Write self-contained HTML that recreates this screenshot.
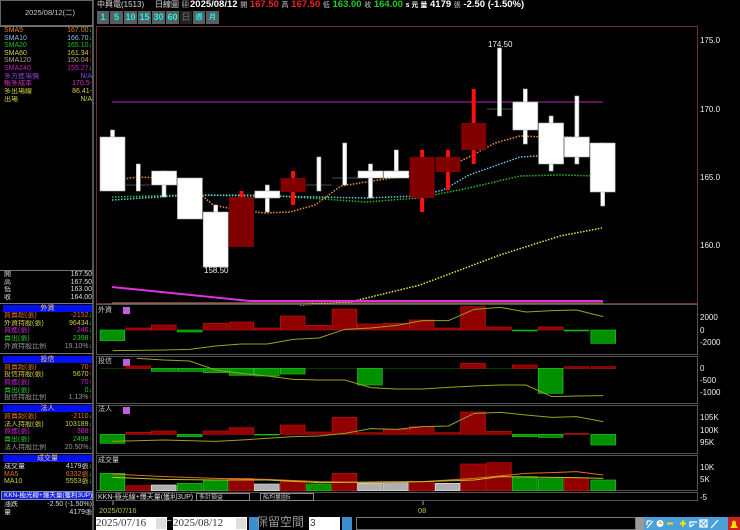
<!DOCTYPE html>
<html><head><meta charset="utf-8"><style>
*{margin:0;padding:0;box-sizing:border-box}
body{width:740px;height:530px;background:#000;overflow:hidden;position:relative;font-family:"Liberation Sans","Noto Sans CJK TC",sans-serif;color:#fff}
.a{position:absolute;white-space:nowrap;line-height:1}
.s{font-size:8px}
.hd{position:absolute;left:3px;width:89px;height:7px;background:#0010f0;color:#fc6;font-size:7px;line-height:7px;text-align:center}
.row{position:absolute;left:4px;width:88px;font-size:7px;line-height:8px;height:8px;display:flex;justify-content:space-between;white-space:nowrap;overflow:hidden}
.row b{font-weight:normal}
.up{color:#f22}.dn{color:#2d2}
.btn{position:absolute;top:11px;height:13px;background:#566060;color:#2ee;font-size:9px;line-height:13px;text-align:center;font-weight:bold}
</style></head><body>
<div class="a" style="left:0;top:0;width:94px;height:530px;border-right:2px solid #555"></div>
<div class="a" style="left:0;top:0;width:93px;height:26px;border:1px solid #666"></div>
<div class="a s" style="left:25px;top:9px;color:#ccc;font-size:7.5px">2025/08/12(二)</div>
<div class="a" style="left:0;top:26px;width:93px;height:1px;background:#777"></div>
<div class="row" style="top:27px;color:#e08020"><span>SMA5</span><b>167.00<span class="dn">↓</span></b></div>
<div class="row" style="top:35px;color:#80c0e0"><span>SMA10</span><b>166.70<span class="dn">↓</span></b></div>
<div class="row" style="top:42px;color:#20c020"><span>SMA20</span><b>165.10<span class="dn">↓</span></b></div>
<div class="row" style="top:50px;color:#d0d040"><span>SMA60</span><b>161.34<span class="up">↑</span></b></div>
<div class="row" style="top:57px;color:#c0a080"><span>SMA120</span><b>150.04<span class="up">↑</span></b></div>
<div class="row" style="top:65px;color:#c020c0"><span>SMA240</span><b>155.27<span class="dn">↓</span></b></div>
<div class="row" style="top:73px;color:#9040e0"><span>多方進場價</span><b>N/A</b></div>
<div class="row" style="top:80px;color:#e030c0"><span>帳多成本</span><b>170.5-</b></div>
<div class="row" style="top:88px;color:#d0d040"><span>多出場線</span><b>86.41-</b></div>
<div class="row" style="top:96px;color:#d0d040"><span>出場</span><b>N/A</b></div>
<div class="a" style="left:0;top:270px;width:93px;height:1px;background:#777"></div>
<div class="row" style="top:271px;color:#ddd"><span>開</span><b>167.50</b></div>
<div class="row" style="top:279px;color:#ddd"><span>高</span><b>167.50</b></div>
<div class="row" style="top:286px;color:#ddd"><span>低</span><b>163.00</b></div>
<div class="row" style="top:294px;color:#ddd"><span>收</span><b>164.00</b></div>
<div class="a" style="left:0;top:303px;width:93px;height:1px;background:#777"></div>
<div class="hd" style="top:305px">外資</div>
<div class="row" style="top:312px;color:#e07020"><span>買賣超(張)</span><b>-2152<span class="dn">↓</span></b></div>
<div class="row" style="top:320px;color:#d0d040"><span>外資持股(張)</span><b>96434<span class="dn">↓</span></b></div>
<div class="row" style="top:327px;color:#d020d0"><span>買進(張)</span><b>246<span class="dn">↓</span></b></div>
<div class="row" style="top:335px;color:#20d020"><span>賣出(張)</span><b>2398<span class="up">↑</span></b></div>
<div class="row" style="top:343px;color:#999"><span>外資持股比例</span><b>19.10%<span class="dn">↓</span></b></div>
<div class="a" style="left:0;top:353px;width:93px;height:1px;background:#777"></div>
<div class="hd" style="top:356px">投信</div>
<div class="row" style="top:364px;color:#e07020"><span>買賣超(張)</span><b>70<span class="up">↑</span></b></div>
<div class="row" style="top:371px;color:#d0d040"><span>投信持股(張)</span><b>5670<span class="up">↑</span></b></div>
<div class="row" style="top:379px;color:#d020d0"><span>買進(張)</span><b>70<span class="up">↑</span></b></div>
<div class="row" style="top:387px;color:#20d020"><span>賣出(張)</span><b>0<span class="dn">↓</span></b></div>
<div class="row" style="top:394px;color:#999"><span>投信持股比例</span><b>1.13%<span class="up">↑</span></b></div>
<div class="a" style="left:0;top:403px;width:93px;height:1px;background:#777"></div>
<div class="hd" style="top:405px">法人</div>
<div class="row" style="top:413px;color:#e07020"><span>買賣超(張)</span><b>-2110<span class="dn">↓</span></b></div>
<div class="row" style="top:421px;color:#d0d040"><span>法人持股(張)</span><b>103189<span class="dn">↓</span></b></div>
<div class="row" style="top:428px;color:#d020d0"><span>買進(張)</span><b>388<span class="up">↑</span></b></div>
<div class="row" style="top:436px;color:#20d020"><span>賣出(張)</span><b>2498<span class="up">↑</span></b></div>
<div class="row" style="top:444px;color:#999"><span>法人持股比例</span><b>20.50%<span class="dn">↓</span></b></div>
<div class="a" style="left:0;top:453px;width:93px;height:1px;background:#777"></div>
<div class="hd" style="top:455px">成交量</div>
<div class="row" style="top:463px;color:#ddd"><span>成交量</span><b>4179張<span class="dn">↓</span></b></div>
<div class="row" style="top:471px;color:#e07020"><span>MA5</span><b>6332張<span class="dn">↓</span></b></div>
<div class="row" style="top:478px;color:#d0d040"><span>MA10</span><b>5553張<span class="dn">↓</span></b></div>
<div class="a" style="left:1px;top:491px;width:92px;height:9px;background:#1020e0;border:1px solid #88a;color:#fff;font-size:6.5px;line-height:7px;padding-left:2px;overflow:hidden">KKN-極光線+爆天量(獲利3UP)</div>
<div class="row" style="top:501px;color:#ddd"><span>漲跌</span><b>-2.50 (-1.50%)</b></div>
<div class="row" style="top:509px;color:#ddd"><span>量</span><b>4179張</b></div>

<div class="a" style="left:97px;top:1px;font-size:8px;color:#ddd">中興電(1513)</div>
<div class="a" style="left:155px;top:1px;font-size:8px;color:#ddd">日線圖 ▦</div>
<div class="a" style="left:190px;top:0;font-size:9.5px;font-weight:bold;color:#fff">2025/08/12 <span style="font-size:7px;font-weight:normal;color:#ccc">開</span> <span style="color:#e22">167.50</span> <span style="font-size:7px;font-weight:normal;color:#ccc">高</span> <span style="color:#e22">167.50</span> <span style="font-size:7px;font-weight:normal;color:#ccc">低</span> <span style="color:#2c2">163.00</span> <span style="font-size:7px;font-weight:normal;color:#ccc">收</span> <span style="color:#2c2">164.00</span> <span style="font-size:7px">s 元 量</span> 4179 <span style="font-size:7px;font-weight:normal;color:#ccc">張</span> -2.50 (-1.50%)</div>
<div class="btn" style="left:97px;width:12px">1</div>
<div class="btn" style="left:110px;width:13px">5</div>
<div class="btn" style="left:124px;width:13px">10</div>
<div class="btn" style="left:138px;width:13px">15</div>
<div class="btn" style="left:152px;width:13px">30</div>
<div class="btn" style="left:166px;width:13px">60</div>
<div class="btn" style="left:180px;width:12px;background:#222;color:#555">日</div>
<div class="btn" style="left:193px;width:12px;font-size:7px">週</div>
<div class="btn" style="left:206px;width:13px;font-size:7px">月</div>

<svg class="a" style="left:0;top:0" width="740" height="530" viewBox="0 0 740 530">
<rect x="96.5" y="26.5" width="601" height="277" fill="none" stroke="#6a3040"/>
<line x1="112" y1="102" x2="603" y2="102" stroke="#902090" stroke-width="1.2"/>
<g fill="none" stroke-width="1.5" stroke-dasharray="1.5 1.5">
<polyline stroke="#e8e840" points="300,305 350,302 420,285 500,255 560,236 602,228"/>
<polyline stroke="#20c020" points="112,197 188,195 264,195 366,202 418,198 469,188 520,176 560,175 598,176"/>
<polyline stroke="#70c8e8" points="112,200 188,195 264,196 366,198 418,196 443,190 469,175 520,157 572,154 598,154"/>
<polyline stroke="#f09030" points="112,181 137,177 162,178 188,183 213,205 238,210 264,213 290,212 315,205 341,186 366,182 392,178 418,175 443,169 469,157 495,143 520,136 546,137 572,137 598,148"/>
</g>
<polyline fill="none" stroke="#e030e0" stroke-width="2" points="112,287 250,301 603,301"/>
<line x1="112" y1="303" x2="603" y2="303" stroke="#c09070" stroke-width="1"/>
<g stroke="#aaa" stroke-width="0.6">
<rect x="110.5" y="130" width="4" height="7" fill="#fff"/><rect x="100" y="137" width="25" height="54" fill="#fff"/>
<line x1="126" y1="185" x2="150" y2="185" stroke="#999"/><rect x="136.3" y="164" width="4" height="27" fill="#fff"/>
<rect x="162" y="171" width="4" height="26" fill="#fff"/><rect x="151.6" y="171" width="25" height="14" fill="#fff"/>
<rect x="177.4" y="178" width="25" height="41" fill="#fff"/>
<rect x="213.7" y="205" width="4" height="7" fill="#fff"/><rect x="203.2" y="212" width="25" height="55" fill="#fff"/>
<rect x="265.3" y="185" width="4" height="27" fill="#fff"/><rect x="254.8" y="191" width="25" height="7" fill="#fff"/>
<line x1="306" y1="185" x2="332" y2="185" stroke="#999"/><rect x="316.9" y="157" width="4" height="34" fill="#fff"/>
<line x1="332" y1="178" x2="358" y2="178" stroke="#999"/><rect x="342.7" y="143" width="4" height="42" fill="#fff"/>
<rect x="368.5" y="164" width="4" height="34" fill="#fff"/><rect x="358" y="171" width="25" height="7" fill="#fff"/>
<rect x="394.3" y="150" width="4" height="28" fill="#fff"/><rect x="383.8" y="171" width="25" height="7" fill="#fff"/>
<line x1="487" y1="109" x2="512" y2="109" stroke="#999"/><rect x="497.5" y="48" width="4" height="68" fill="#fff"/>
<rect x="523.3" y="89" width="4" height="55" fill="#fff"/><rect x="512.8" y="102" width="25" height="28" fill="#fff"/>
<rect x="549.1" y="116" width="4" height="55" fill="#fff"/><rect x="538.6" y="123" width="25" height="41" fill="#fff"/>
<rect x="574.9" y="96" width="4" height="68" fill="#fff"/><rect x="564.4" y="137" width="25" height="20" fill="#fff"/>
<rect x="600.7" y="143" width="4" height="63" fill="#fff"/><rect x="590.2" y="143" width="25" height="49" fill="#fff"/>
</g>
<g fill="#ff1010">
<rect x="239.5" y="191" width="4" height="8"/><rect x="291.1" y="171" width="4" height="34"/>
<rect x="420.1" y="150" width="4" height="62"/><rect x="445.9" y="150" width="4" height="40"/><rect x="471.7" y="89" width="4" height="75"/>
</g>
<g fill="#800000">
<rect x="229" y="197" width="25" height="50"/><rect x="280.6" y="178" width="25" height="14"/>
<rect x="409.6" y="157" width="25" height="41"/><rect x="435.4" y="157" width="25" height="15"/><rect x="461.2" y="123" width="25" height="27"/>
</g>
<g font-size="8" fill="#eee" font-family="Liberation Sans">
<text x="488" y="47">174.50</text><text x="204" y="273">158.50</text>
<text x="700" y="43">175.0</text><text x="700" y="112">170.0</text><text x="700" y="180">165.0</text><text x="700" y="248">160.0</text>
<text x="700" y="320">2000</text><text x="700" y="333">0</text><text x="700" y="345">-2000</text>
<text x="700" y="371">0</text><text x="700" y="383">-500</text><text x="700" y="395">-1000</text>
<text x="700" y="420">105K</text><text x="700" y="433">100K</text><text x="700" y="445">95K</text>
<text x="700" y="470">10K</text><text x="700" y="482">5K</text><text x="700" y="500">-5</text>
</g>
<g fill="none" stroke="#555">
<rect x="96.5" y="304.5" width="601" height="50"/>
<rect x="96.5" y="356.5" width="601" height="47"/>
<rect x="96.5" y="405.5" width="601" height="48"/>
<rect x="96.5" y="455.5" width="601" height="35"/>
<rect x="96.5" y="492.5" width="601" height="8"/>
</g>
<g font-size="7" fill="#ccc"><text x="98" y="312">外資</text><text x="98" y="363">投信</text><text x="98" y="411">法人</text><text x="98" y="462">成交量</text></g>
<g fill="#c060e0"><rect x="123" y="307" width="7" height="7"/><rect x="123" y="359" width="7" height="7"/><rect x="123" y="407" width="7" height="7"/></g>
<g transform="translate(96,300) scale(0.4107,0.33333)">
<g fill="#009000" stroke="#20c020" stroke-width="2"><rect x="10" y="90" width="60" height="32"/><rect x="198" y="90" width="60" height="6"/><rect x="1014" y="90" width="60" height="3"/><rect x="1140" y="90" width="60" height="3"/><rect x="1205" y="90" width="60" height="40"/></g>
<g fill="#900000" stroke="#c01010" stroke-width="2"><rect x="73" y="84" width="60" height="6"/><rect x="135" y="75" width="60" height="15"/><rect x="261" y="70" width="60" height="20"/><rect x="324" y="66" width="60" height="24"/><rect x="386" y="84" width="60" height="6"/><rect x="449" y="48" width="60" height="42"/><rect x="512" y="76" width="60" height="14"/><rect x="575" y="27" width="60" height="63"/><rect x="637" y="72" width="60" height="18"/><rect x="700" y="70" width="60" height="20"/><rect x="763" y="60" width="60" height="30"/><rect x="826" y="84" width="60" height="6"/><rect x="888" y="20" width="60" height="70"/><rect x="951" y="81" width="60" height="9"/><rect x="1077" y="81" width="60" height="9"/></g>
<polyline fill="none" stroke="#a0a020" stroke-width="1" vector-effect="non-scaling-stroke" points="40,152 165,150 228,148 291,138 354,132 417,132 480,118 543,114 606,88 669,84 732,76 795,62 858,62 921,28 984,22 1047,36 1110,32 1170,30 1235,50"/>
<line x1="10" y1="205" x2="1265" y2="205" stroke="#006000" stroke-width="2"/>
<g fill="#009000" stroke="#20c020" stroke-width="2"><rect x="135" y="205" width="60" height="9"/><rect x="198" y="205" width="60" height="9"/><rect x="261" y="205" width="60" height="13"/><rect x="324" y="205" width="60" height="21"/><rect x="386" y="205" width="60" height="23"/><rect x="449" y="205" width="60" height="17"/><rect x="637" y="205" width="60" height="50"/><rect x="1077" y="205" width="60" height="75"/></g>
<g fill="#900000" stroke="#c01010" stroke-width="2"><rect x="73" y="198" width="60" height="7"/><rect x="888" y="190" width="60" height="15"/><rect x="1014" y="195" width="60" height="10"/><rect x="1140" y="200" width="60" height="5"/><rect x="1205" y="200" width="60" height="5"/></g>
<polyline fill="none" stroke="#a0a020" stroke-width="1" vector-effect="non-scaling-stroke" points="100,175 165,180 228,183 291,210 354,220 417,228 480,238 543,240 606,240 669,263 732,267 795,267 858,262 921,258 984,255 1047,255 1110,290 1170,288 1235,287"/>
<g fill="#009000" stroke="#20c020" stroke-width="2"><rect x="10" y="403" width="60" height="27"/><rect x="198" y="403" width="60" height="7"/><rect x="386" y="403" width="60" height="2"/><rect x="1014" y="403" width="60" height="7"/><rect x="1077" y="403" width="60" height="9"/><rect x="1205" y="403" width="60" height="32"/></g>
<g fill="#900000" stroke="#c01010" stroke-width="2"><rect x="73" y="397" width="60" height="6"/><rect x="135" y="393" width="60" height="10"/><rect x="261" y="393" width="60" height="10"/><rect x="324" y="383" width="60" height="20"/><rect x="449" y="375" width="60" height="28"/><rect x="512" y="396" width="60" height="7"/><rect x="575" y="352" width="60" height="51"/><rect x="637" y="398" width="60" height="5"/><rect x="700" y="388" width="60" height="15"/><rect x="763" y="380" width="60" height="23"/><rect x="826" y="398" width="60" height="5"/><rect x="888" y="336" width="60" height="67"/><rect x="951" y="394" width="60" height="9"/><rect x="1140" y="400" width="60" height="3"/></g>
<polyline fill="none" stroke="#a0a020" stroke-width="1" vector-effect="non-scaling-stroke" points="40,424 165,420 291,424 354,420 480,410 543,408 606,400 669,386 732,388 795,380 858,378 921,340 984,337 1047,345 1110,352 1170,350 1235,365"/>
<g fill="#009000" stroke="#20c020" stroke-width="2"><rect x="10" y="520" width="60" height="52"/><rect x="198" y="550" width="60" height="22"/><rect x="261" y="540" width="60" height="32"/><rect x="512" y="552" width="60" height="20"/><rect x="1014" y="530" width="60" height="42"/><rect x="1077" y="536" width="60" height="36"/><rect x="1205" y="540" width="60" height="32"/></g>
<g fill="#900000" stroke="#c01010" stroke-width="2"><rect x="73" y="557" width="60" height="15"/><rect x="324" y="535" width="60" height="37"/><rect x="449" y="545" width="60" height="27"/><rect x="575" y="520" width="60" height="52"/><rect x="763" y="545" width="60" height="27"/><rect x="888" y="492" width="60" height="80"/><rect x="951" y="488" width="60" height="84"/><rect x="1140" y="534" width="60" height="38"/></g>
<g fill="#b0b0b0" stroke="#ddd" stroke-width="2"><rect x="135" y="555" width="60" height="17"/><rect x="386" y="552" width="60" height="20"/><rect x="637" y="550" width="60" height="22"/><rect x="700" y="546" width="60" height="26"/><rect x="826" y="550" width="60" height="22"/></g>
<polyline fill="none" stroke="#e07020" stroke-width="1" vector-effect="non-scaling-stroke" points="40,522 165,530 291,535 417,538 543,545 669,548 795,545 921,535 1047,520 1110,518 1170,515 1235,525"/>
<polyline fill="none" stroke="#c0c020" stroke-width="1" vector-effect="non-scaling-stroke" points="40,532 165,538 291,540 417,540 543,548 669,546 795,545 921,540 984,530 1110,532 1170,533 1235,535"/>
</g>
<text x="98" y="499" font-size="7" fill="#ddd">KKN-極光線+爆天量(獲利3UP)</text>
<rect x="196.5" y="493.5" width="53" height="7" fill="#000" stroke="#888"/><text x="199" y="499" font-size="6" fill="#ccc">多計損益</text>
<rect x="260.5" y="493.5" width="53" height="7" fill="#000" stroke="#888"/><text x="263" y="499" font-size="6" fill="#ccc">船均量圖5</text>
<line x1="113" y1="501" x2="113" y2="505" stroke="#aa6"/><line x1="423" y1="501" x2="423" y2="505" stroke="#aa6"/>
<text x="99" y="513" font-size="7.5" fill="#c0c040">2025/07/16</text><text x="418" y="513" font-size="7.5" fill="#c0c040">08</text>
<!-- toolbar icons -->
<rect x="636" y="517" width="8" height="13" fill="#999"/>
<rect x="644" y="517" width="84" height="13" fill="#4aa0d8"/>
<g stroke="#fff" stroke-width="1.2" fill="none">
<path d="M647 528 L653 521 M647 521 H651 M647 521 V525"/>
<line x1="667" y1="523.5" x2="673" y2="523.5" stroke="#fd0" stroke-width="2"/>
<path d="M680 523.5 H686 M683 520.5 V526.5" stroke="#fd0" stroke-width="2"/>
<path d="M690 527 V522 H697 M690 527 L694 524"/>
<rect x="700" y="520" width="7" height="7"/><path d="M700 520 L707 527 M707 520 L700 527"/>
<path d="M711 528 L718 520"/>
</g>
<circle cx="660" cy="523.5" r="3.5" fill="#fff"/><path d="M660 521 V523.5 H662" stroke="#f80" fill="none"/>
<rect x="728" y="517" width="12" height="13" fill="#d02020"/>
<path d="M730 528 H738 L736 525 V522 Q734 519 732 522 V525 Z" fill="#fd0"/>
</svg>
<div class="a" style="left:96px;top:517px;width:71px;height:13px;background:#fff;color:#333;font-size:11px;line-height:13px;font-family:'Liberation Serif',serif">2025/07/16</div>
<div class="a" style="left:156px;top:518px;width:10px;height:11px;background:#ddd"></div>
<div class="a" style="left:166px;top:517px;color:#ccc;font-size:10px">~</div>
<div class="a" style="left:173px;top:517px;width:74px;height:13px;background:#fff;color:#333;font-size:11px;line-height:13px;font-family:'Liberation Serif',serif">2025/08/12</div>
<div class="a" style="left:236px;top:518px;width:10px;height:11px;background:#ddd"></div>
<div class="a" style="left:249px;top:517px;width:10px;height:13px;background:#3a8fd0"></div>
<div class="a" style="left:256px;top:516px;color:#999;font-size:12px">保留空間</div>
<div class="a" style="left:309px;top:517px;width:31px;height:13px;background:#fff;color:#333;font-size:10px;line-height:13px;padding-left:1px">3</div>
<div class="a" style="left:342px;top:517px;width:10px;height:13px;background:#3a8fd0"></div>
<div class="a" style="left:356px;top:517px;width:280px;height:13px;border:1px solid #777;background:#000"></div>
</body></html>
